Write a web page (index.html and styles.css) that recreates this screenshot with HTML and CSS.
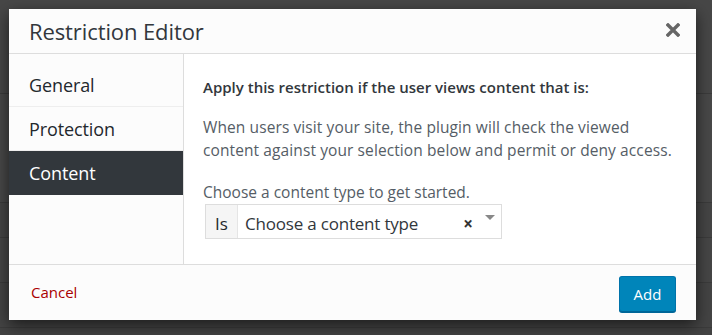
FILE: index.html
```html
<!DOCTYPE html>
<html>
	<head>
		<meta charset="utf-8" />
		<title>Restriction Editor</title>
		<link rel="stylesheet" href="styles.css">
	</head>
	<body>
		<div class="backdrop">
			<div class="row row_a"></div>
			<div class="row row_b"></div>
			<div class="row row_c"></div>
			<div class="row row_d"></div>
			<div class="row row_e"></div>
		</div>
		<div class="modal">
			<div class="modal_head">
				<h2 class="modal_title">Restriction Editor</h2>
				<span class="close_btn">
					<svg width="14" height="14" viewBox="0 0 14 14"><path d="M2 2 L12 12 M12 2 L2 12" stroke="#666" stroke-width="3.4" stroke-linecap="square"/></svg>
				</span>
			</div>
			<div class="modal_body">
				<ul class="tabs">
					<li class="tab">General</li>
					<li class="tab">Protection</li>
					<li class="tab tab_active">Content</li>
				</ul>
				<div class="panel">
					<p class="panel_heading">Apply this restriction if the user views content that is:</p>
					<p class="panel_txt">When users visit your site, the plugin will check the viewed<br>content against your selection below and permit or deny access.</p>
					<label class="field_label">Choose a content type to get started.</label>
					<div class="select_box">
						<span class="select_prefix">Is</span>
						<span class="select_value">Choose a content type</span>
						<span class="select_clear">×</span>
						<span class="select_arrow"></span>
					</div>
				</div>
			</div>
			<div class="modal_foot">
				<a class="cancel_link">Cancel</a>
				<button type="button" class="add_btn">Add</button>
			</div>
		</div>
	</body>
</html>
```

FILE: styles.css
```css
* {
	padding: 0;
	margin: 0;
	box-sizing: border-box;
}
body {
	width: 712px;
	height: 335px;
	overflow: hidden;
	background-color: #434343;
	font-family: "Open Sans", "Noto Sans", sans-serif;
	position: relative;
}
.backdrop {
	display: flex;
	flex-direction: column;
}
.row {
	border-bottom: 1px solid #3b3b3b;
	background-color: #464646;
}
.row_a { height: 94px; background-color: #474747; }
.row_b { height: 109px; background-color: #484848; }
.row_c { height: 35px; background-color: #454545; }
.row_d { height: 45px; background-color: #464646; }
.row_e { height: 45px; background-color: #444444; }
.modal {
	position: absolute;
	left: 9px;
	top: 9px;
	width: 687px;
	height: 311px;
	background: #fff;
	box-shadow: 0 5px 15px rgba(0,0,0,0.6);
	display: flex;
	flex-direction: column;
}
.modal_head {
	height: 45px;
	flex-shrink: 0;
	background: #fcfcfc;
	border-bottom: 1px solid #ddd;
	display: flex;
	align-items: center;
	justify-content: space-between;
	padding: 0 16px 0 20px;
}
.modal_title {
	font-size: 22px;
	font-weight: 400;
	color: #32373c;
	letter-spacing: -0.1px;
}
.close_btn {
	display: flex;
	margin-top: -2px;
}
.modal_body {
	flex: 1;
	display: flex;
}
.tabs {
	list-style: none;
	width: 175px;
	flex-shrink: 0;
	background: #fcfcfc;
	border-right: 1px solid #ddd;
	padding-top: 9px;
}
.tab {
	height: 44px;
	border-bottom: 1px solid #eee;
	padding: 0 20px;
	display: flex;
	align-items: center;
	font-size: 18px;
	color: #23282d;
	letter-spacing: -0.1px;
}
.tab_active {
	background: #32373c;
	color: #fff;
	border-bottom-color: #32373c;
}
.panel {
	flex: 1;
	padding: 23px 20px 0 19px;
	color: #555d66;
}
.panel_heading {
	font-size: 15px;
	line-height: 20px;
	font-weight: 600;
	color: #32373c;
	margin-bottom: 19px;
}
.panel_txt {
	font-size: 15.5px;
	line-height: 23px;
	letter-spacing: 0.1px;
	white-space: nowrap;
	margin-bottom: 20px;
}
.field_label {
	display: block;
	font-size: 15.5px;
	line-height: 20px;
	margin-bottom: 2px;
}
.select_box {
	width: 297px;
	height: 35px;
	margin-left: 2px;
	border: 1px solid #ddd;
	display: flex;
	align-items: center;
	position: relative;
}
.select_prefix {
	width: 32px;
	height: 100%;
	padding-top: 3px;
	background: #f5f5f5;
	border-right: 1px solid #e5e5e5;
	display: flex;
	align-items: center;
	justify-content: center;
	font-size: 17px;
	color: #23282d;
}
.select_value {
	flex: 1;
	padding: 3px 0 0 7px;
	font-size: 17px;
	color: #32373c;
	letter-spacing: -0.2px;
}
.select_clear {
	font-size: 17px;
	font-weight: 700;
	color: #333;
	margin-right: 12px;
	margin-top: 4px;
}
.select_arrow {
	width: 0;
	height: 0;
	border-left: 5px solid transparent;
	border-right: 5px solid transparent;
	border-top: 5px solid #888;
	margin-right: 6px;
	margin-top: -8px;
}
.modal_foot {
	height: 56px;
	flex-shrink: 0;
	background: #fcfcfc;
	border-top: 1px solid #ddd;
	display: flex;
	align-items: center;
	justify-content: space-between;
	padding: 0 20px 0 22px;
}
.cancel_link {
	color: #a00;
	font-size: 15px;
	margin-top: -1px;
}
.add_btn {
	width: 57px;
	height: 36px;
	background: #0085ba;
	border: 1px solid #0073aa;
	border-bottom-color: #006799;
	border-radius: 3px;
	box-shadow: 0 1px 0 #006799;
	color: #fff;
	font-family: "Open Sans", "Noto Sans", sans-serif;
	font-size: 15px;
	margin-top: 2px;
}
```
